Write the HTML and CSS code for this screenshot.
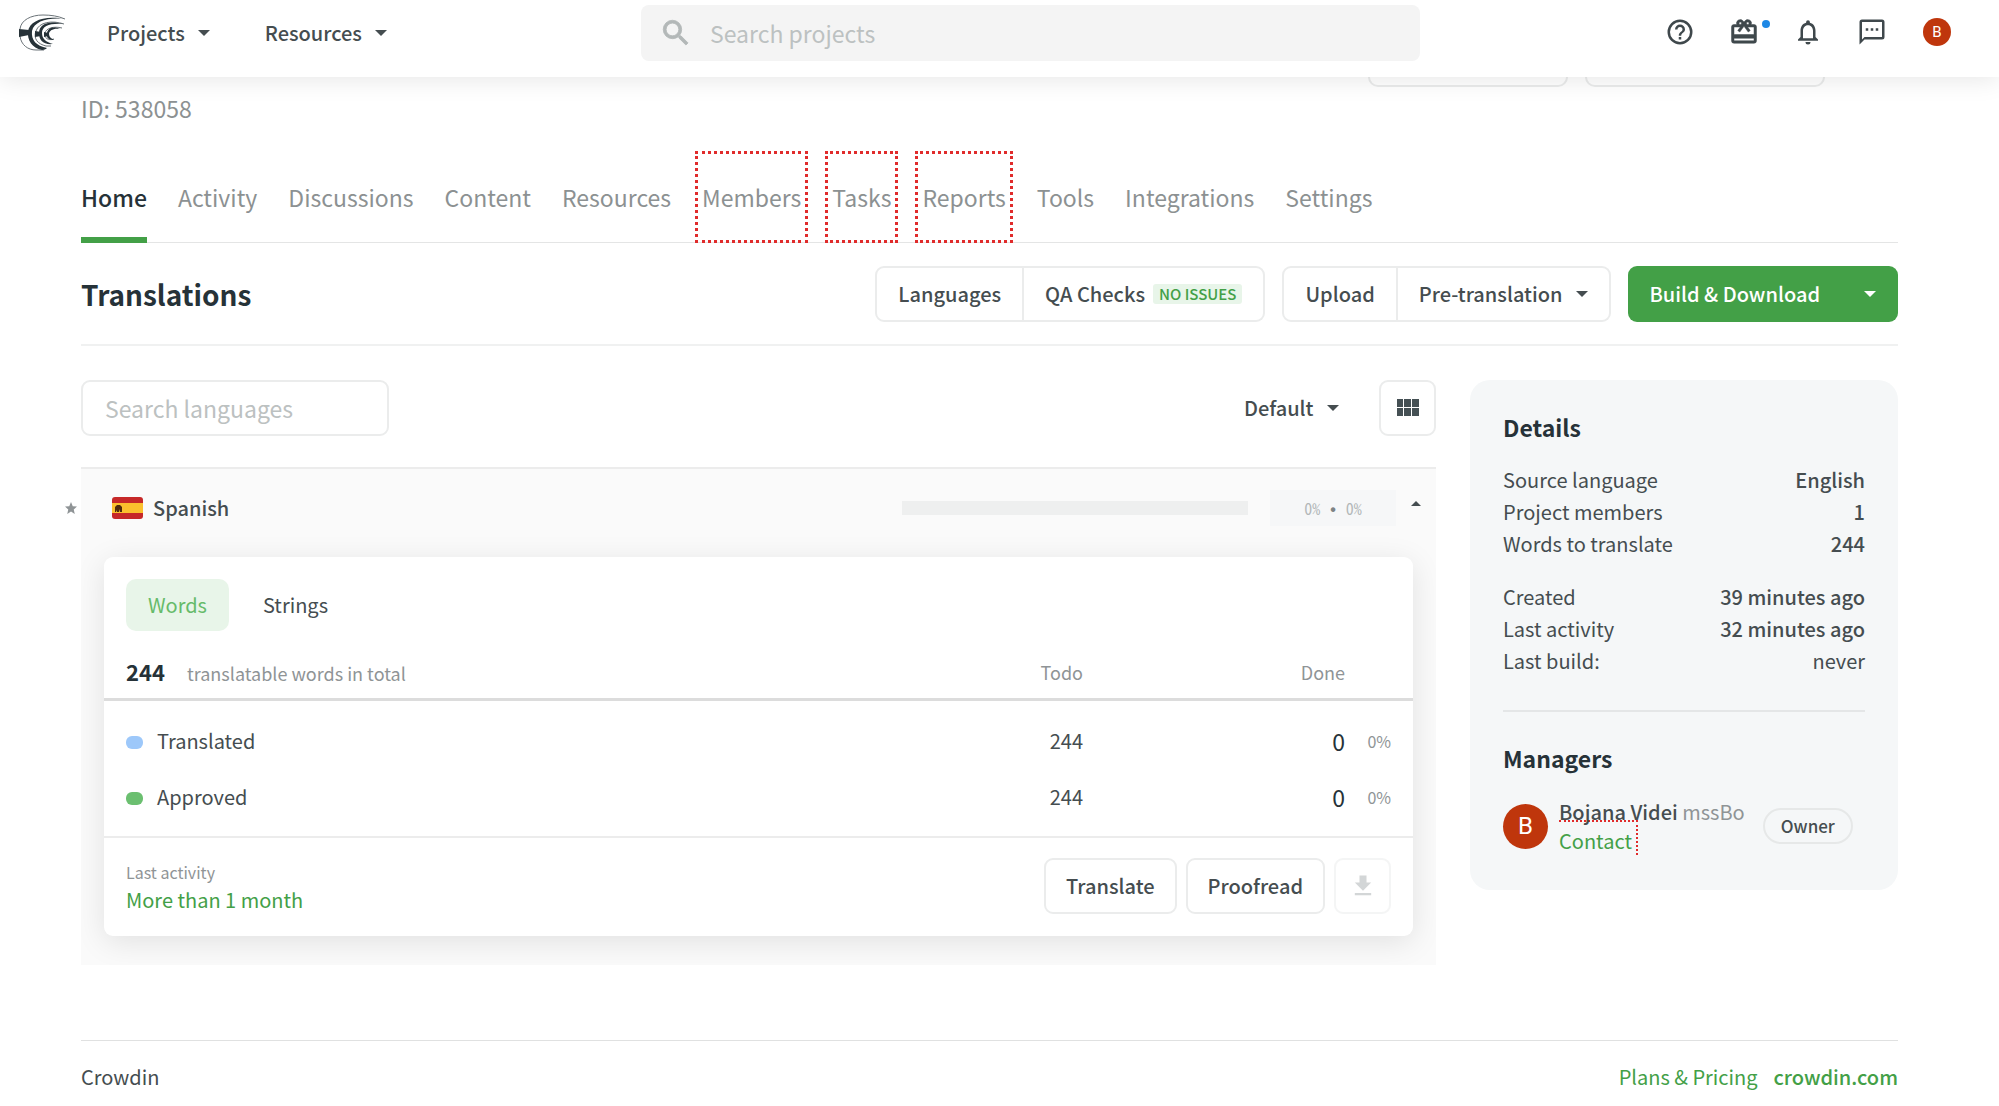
FILE: index.html
```html
<!DOCTYPE html>
<html lang="en">
<head>
    <meta charset="utf-8">
    <title>Translations - Crowdin</title>
    <link rel="stylesheet" href="styles.css">
</head>
<body>
    <header class="topbar">
        <div class="topbar-left">
            <a href="#" class="logo" aria-label="Crowdin">
                <svg width="48" height="38" viewBox="0 0 48 38" fill="none">
                    <path d="M1 15C2 6 12 1 24 1c8 0 15 1 22 4" stroke="#6b7378" stroke-width="1"/>
                    <path d="M1 22c1 9 8 14 16 14h8" stroke="#6b7378" stroke-width="1"/>
                    <path d="M46 5C30 3 15 7 13 17c-1 9 4 15 15 17-1 1-3 2-5 2C13 34 8 26 9 17 11 7 25 1 46 5z" fill="#263238"/>
                    <path d="M0 15l10 1v5l-10 2z" fill="#263238"/>
                    <path d="M45 10C33 6 20 8 17 17c-3 8 2 13 10 15h5" stroke="#6b7378" stroke-width="1"/>
                    <path d="M44 10C31 9 23 12 23 19c0 6 4 9 11 11-10 1-14-4-14-11C20 10 30 6 44 10z" fill="#263238"/>
                    <path d="M16 17l6 1v4l-6 1z" fill="#263238"/>
                    <path d="M43 14c-8-2-16 0-17 5-1 5 3 8 9 6" stroke="#6b7378" stroke-width="1"/>
                    <path d="M41 15c-7-1-11 2-11 5 0 3 2 4 5 6-5 0-8-2-7-7 1-5 6-7 13-4z" fill="#263238"/>
                    <path d="M25 18l4 1v3l-4 1z" fill="#263238"/>
                </svg>
            </a>
            <button type="button" class="menu-btn">Projects <span class="caret"></span></button>
            <button type="button" class="menu-btn">Resources <span class="caret"></span></button>
        </div>
        <label class="top-search">
            <svg width="34" height="34" viewBox="0 0 24 24" fill="#b3b8b8" stroke="#b3b8b8" stroke-width=".6"><path d="M15.500 14h-.79l-.28-.27A6.470 6.470 0 0 0 16 9.500 6.500 6.500 0 1 0 9.500 16c1.610 0 3.090-.59 4.230-1.570l.27.28v.79l5 4.990L20.490 19zm-6 0a4.500 4.500 0 1 1 0-9 4.500 4.500 0 0 1 0 9z"/></svg>
            <input type="text" placeholder="Search projects" aria-label="Search projects">
        </label>
        <div class="topbar-right">
            <button type="button" class="icon-btn" aria-label="Help">
                <svg width="30" height="30" viewBox="0 0 24 24"><path d="M11 18h2v-2h-2zm1-16a10 10 0 1 0 0 20 10 10 0 0 0 0-20zm0 18a8 8 0 1 1 0-16 8 8 0 0 1 0 16zm0-14a4 4 0 0 0-4 4h2a2 2 0 1 1 4 0c0 2-3 1.750-3 5h2c0-2.250 3-2.500 3-5a4 4 0 0 0-4-4z"/></svg>
            </button>
            <button type="button" class="icon-btn" aria-label="What's new">
                <svg width="30" height="30" viewBox="0 0 24 24" stroke="#3f484c" stroke-width=".4"><path d="M20 6h-2.180A3 3 0 0 0 12.500 3.350l-.5.670-.5-.68A3 3 0 0 0 6.180 6H4a2 2 0 0 0-2 2v11a2 2 0 0 0 2 2h16a2 2 0 0 0 2-2V8a2 2 0 0 0-2-2zm-5-2a1 1 0 1 1 0 2 1 1 0 0 1 0-2zM9 4a1 1 0 1 1 0 2 1 1 0 0 1 0-2zm11 15H4v-2h16zm0-5H4V8h5.080L7 10.830 8.620 12 12 7.400l3.380 4.600L17 10.830 14.920 8H20z"/></svg>
                <span class="dot"></span>
            </button>
            <button type="button" class="icon-btn" aria-label="Notifications">
                <svg width="30" height="30" viewBox="0 0 24 24"><path d="M12 22a2 2 0 0 0 2-2h-4a2 2 0 0 0 2 2zm6-6v-5c0-3.070-1.630-5.640-4.500-6.320V4a1.500 1.500 0 0 0-3 0v.68C7.640 5.360 6 7.920 6 11v5l-2 2v1h16v-1zm-2 1H8v-6c0-2.480 1.510-4.500 4-4.500s4 2.020 4 4.500z"/></svg>
            </button>
            <button type="button" class="icon-btn" aria-label="Messages">
                <svg width="30" height="30" viewBox="0 0 24 24"><path d="M20 2H4a2 2 0 0 0-2 2v18l4-4h14a2 2 0 0 0 2-2V4a2 2 0 0 0-2-2zm0 14H6l-2 2V4h16zM7 9h2v2H7zm4 0h2v2h-2zm4 0h2v2h-2z"/></svg>
            </button>
            <a href="#" class="avatar avatar-sm">B</a>
        </div>
    </header>

    <main class="page">
        <div class="project-head">
            <div class="project-id">ID: 538058</div>
            <div class="project-actions">
                <span class="action-edge"></span>
                <span class="action-edge action-edge-wide"></span>
            </div>
        </div>

        <nav class="tabs">
            <a href="#" class="active">Home</a>
            <a href="#">Activity</a>
            <a href="#">Discussions</a>
            <a href="#">Content</a>
            <a href="#">Resources</a>
            <a href="#" class="marked">Members</a>
            <a href="#" class="marked">Tasks</a>
            <a href="#" class="marked">Reports</a>
            <a href="#">Tools</a>
            <a href="#">Integrations</a>
            <a href="#">Settings</a>
        </nav>

        <div class="title-row">
            <h1>Translations</h1>
            <div class="btn-group">
                <button type="button" class="btn">Languages</button>
                <button type="button" class="btn">QA Checks <span class="badge">NO ISSUES</span></button>
            </div>
            <div class="btn-group">
                <button type="button" class="btn">Upload</button>
                <button type="button" class="btn">Pre-translation <span class="caret"></span></button>
            </div>
            <div class="btn-group primary">
                <button type="button" class="btn">Build &amp; Download</button>
                <button type="button" class="btn" aria-label="More build options"><span class="caret"></span></button>
            </div>
        </div>

        <div class="columns">
            <section class="languages">
                <div class="toolbar">
                    <input type="text" class="lang-search" placeholder="Search languages" aria-label="Search languages">
                    <label class="sort">
                        <select aria-label="Sort order"><option>Default</option></select>
                        <span class="caret"></span>
                    </label>
                    <button type="button" class="btn btn-icon" aria-label="Grid view">
                        <svg width="24" height="20" viewBox="0 0 24 20" fill="#455054"><path d="M1 1h6v8H1zM8 1h7v8H8zM16 1h7v8h-7zM1 10h6v8H1zM8 10h7v8H8zM16 10h7v8h-7z"/></svg>
                    </button>
                </div>

                <div class="lang-item">
                    <svg class="star" width="12" height="12" viewBox="0 0 24 24"><path d="M12 0l3.500 8.500L24 9.200l-6.500 5.700L19.500 24 12 19l-7.500 5 2-9.100L0 9.200l8.500-.7z"/></svg>
                    <div class="lang-panel">
                        <div class="lang-row">
                            <svg width="31" height="22" viewBox="0 0 31 22">
                                <rect width="31" height="22" rx="3" fill="#c62828"/>
                                <rect y="6" width="31" height="10" fill="#fbc02d"/>
                                <path d="M3 15v-5l2-2h3l2 2v5H8v-3l-1 3H5v-2l-1 2z" fill="#4e2a0c"/>
                            </svg>
                            <span class="lang-name">Spanish</span>
                            <span class="progress"></span>
                            <span class="percents">0% <b>•</b> 0%</span>
                            <button type="button" class="toggle" aria-label="Collapse"><span class="caret caret-up"></span></button>
                        </div>

                        <div class="card">
                            <div class="units">
                                <button type="button" class="unit active">Words</button>
                                <button type="button" class="unit">Strings</button>
                            </div>
                            <table class="stats">
                                <thead>
                                    <tr>
                                        <th class="total"><strong>244</strong>translatable words in total</th>
                                        <th class="num">Todo</th>
                                        <th class="num">Done</th>
                                        <th class="pct"></th>
                                    </tr>
                                </thead>
                                <tbody>
                                    <tr>
                                        <td><span class="mark blue"></span>Translated</td>
                                        <td class="num">244</td>
                                        <td class="num done">0</td>
                                        <td class="pct">0%</td>
                                    </tr>
                                    <tr>
                                        <td><span class="mark green"></span>Approved</td>
                                        <td class="num">244</td>
                                        <td class="num done">0</td>
                                        <td class="pct">0%</td>
                                    </tr>
                                </tbody>
                            </table>
                            <div class="card-foot">
                                <div class="last">
                                    <small>Last activity</small>
                                    <a href="#">More than 1 month</a>
                                </div>
                                <button type="button" class="btn">Translate</button>
                                <button type="button" class="btn">Proofread</button>
                                <button type="button" class="btn btn-icon" aria-label="Download" disabled>
                                    <svg width="28" height="28" viewBox="0 0 24 24" fill="#a9aeb0"><path d="M19 9h-4V3H9v6H5l7 7zM5 18v2h14v-2z"/></svg>
                                </button>
                            </div>
                        </div>
                    </div>
                </div>
            </section>

            <aside class="sidebar">
                <h2>Details</h2>
                <dl>
                    <div><dt>Source language</dt><dd>English</dd></div>
                    <div><dt>Project members</dt><dd>1</dd></div>
                    <div><dt>Words to translate</dt><dd>244</dd></div>
                </dl>
                <dl>
                    <div><dt>Created</dt><dd>39 minutes ago</dd></div>
                    <div><dt>Last activity</dt><dd>32 minutes ago</dd></div>
                    <div><dt>Last build:</dt><dd class="plain">never</dd></div>
                </dl>
                <hr>
                <h2>Managers</h2>
                <div class="manager">
                    <span class="avatar">B</span>
                    <div class="who">
                        <div><a href="#" class="name">Bojana Videi</a> <span class="login">mssBo</span></div>
                        <a href="#" class="contact">Contact</a>
                    </div>
                    <span class="role">Owner</span>
                </div>
            </aside>
        </div>

        <footer class="footer">
            <span>Crowdin</span>
            <a href="#">Plans &amp; Pricing</a>
            <a href="#" class="site">crowdin.com</a>
        </footer>
    </main>
</body>
</html>
```
FILE: styles.css
```css
* {
    box-sizing: border-box;
}

body {
    margin: 0;
    background: #fff;
    color: #454d50;
    font: 20px/32px "Noto Sans CJK SC", "Open Sans", sans-serif;
}

a {
    color: #43a047;
    text-decoration: none;
}

button, input, select {
    font: inherit;
    color: inherit;
    margin: 0;
}

button {
    padding: 0;
    border: 0;
    background: none;
    white-space: nowrap;
}

input::placeholder {
    color: #bcc1c1;
    opacity: 1;
}

.caret {
    display: inline-block;
    border: 6px solid transparent;
    border-top-color: currentColor;
    border-bottom: 0;
}

.caret-up {
    border: 5px solid transparent;
    border-bottom-color: currentColor;
    border-top: 0;
}

/* top bar */
.topbar {
    position: relative;
    z-index: 1;
    display: grid;
    grid-template-columns: 622px 1fr 531px;
    align-items: center;
    padding: 5px 48px 16px 19px;
    background: #fff;
    box-shadow: 0 2px 24px rgba(0, 0, 0, .1);
}

.topbar-left {
    display: flex;
    align-items: center;
}

.logo {
    height: 38px;
    margin-right: 40px;
}

.menu-btn {
    display: flex;
    align-items: center;
    gap: 13px;
    margin-right: 55px;
    font-weight: 500;
}

.top-search {
    display: flex;
    align-items: center;
    height: 56px;
    padding: 0 18px;
    gap: 17px;
    border-radius: 8px;
    background: #f4f4f4;
}

.top-search input {
    flex: 1;
    border: 0;
    padding: 0;
    background: none;
    font-size: 23px;
}

.topbar-right {
    display: flex;
    align-items: center;
    justify-content: flex-end;
    gap: 34px;
    padding-bottom: 2px;
}

.icon-btn {
    position: relative;
    height: 30px;
    fill: #3f484c;
}

.icon-btn svg {
    display: block;
}

.dot {
    position: absolute;
    top: 3px;
    right: -11px;
    width: 8px;
    height: 8px;
    border-radius: 50%;
    background: #1e88e5;
}

.avatar {
    flex: none;
    width: 45px;
    height: 45px;
    border-radius: 50%;
    background: #bf360c;
    color: #fff;
    font: 24px/45px Roboto, sans-serif;
    text-align: center;
}

.avatar-sm {
    width: 28px;
    height: 28px;
    margin-left: 2px;
    font-size: 15px;
    line-height: 28px;
}

/* project */
.page {
    padding: 0 101px 0 81px;
}

.project-head {
    display: flex;
    justify-content: space-between;
    height: 74px;
    padding-right: 73px;
}

.project-id {
    padding-top: 15px;
    font-size: 23px;
    color: #8c9192;
}

.project-actions {
    display: flex;
    gap: 17px;
}

.action-edge {
    width: 200px;
    height: 10px;
    border: 2px solid #ebecec;
    border-top: 0;
    border-radius: 0 0 10px 10px;
}

.action-edge-wide {
    width: 240px;
}

.tabs {
    display: flex;
    gap: 31px;
    height: 92px;
    border-bottom: 1px solid #e4e5e5;
    font-size: 23px;
    line-height: 92px;
}

.tabs a {
    height: 92px;
    color: #8c9192;
}

.tabs .active {
    border-bottom: 6px solid #43a047;
    color: #263238;
    font-weight: 500;
}

.tabs .marked {
    margin: 0 -7px;
    padding: 0 4px;
    border: 3px dotted #e02b2b;
    line-height: 86px;
}

.title-row {
    display: flex;
    align-items: center;
    gap: 17px;
    padding: 23px 0 22px;
    border-bottom: 2px solid #f0f1f1;
}

h1 {
    flex: 1;
    margin: 0;
    font-size: 28px;
    font-weight: 700;
    color: #263238;
}

.btn {
    height: 56px;
    padding: 0 22px;
    border: 2px solid #ebecec;
    border-radius: 9px;
    background: #fff;
    font-weight: 500;
    color: #454d50;
}

.btn-icon {
    display: flex;
    align-items: center;
    justify-content: center;
    width: 57px;
    padding: 0;
}

.btn:disabled {
    opacity: .5;
}

.btn-group {
    display: flex;
}

.btn-group .btn {
    display: flex;
    align-items: center;
    padding: 0 21px;
}

.btn-group .btn:first-child {
    border-radius: 9px 0 0 9px;
}

.btn-group .btn:last-child {
    border-left: 0;
    border-radius: 0 9px 9px 0;
}

.btn-group .caret {
    margin-left: 13px;
}

.badge {
    margin-left: 8px;
    padding: 0 6px;
    border-radius: 3px;
    background: #e8f5e9;
    font-size: 15px;
    line-height: 20px;
    color: #43a047;
}

.primary .btn {
    border: 0;
    background: #43a047;
    color: #fff;
    padding: 0 22px;
}

.primary .caret {
    margin: 0;
}

/* languages */
.columns {
    display: grid;
    grid-template-columns: 1fr 428px;
    align-items: start;
    gap: 34px;
    padding: 34px 0 75px;
}

.toolbar {
    display: flex;
    align-items: center;
    margin-bottom: 31px;
}

.lang-search {
    width: 308px;
    height: 56px;
    padding: 0 22px;
    border: 2px solid #ebecec;
    border-radius: 9px;
    font-size: 23px;
}

.sort {
    display: flex;
    align-items: center;
    gap: 13px;
    margin: 0 40px 0 auto;
    font-weight: 500;
}

.sort select {
    appearance: none;
    padding: 0;
    border: 0;
    background: none;
}

.lang-item {
    position: relative;
}

.star {
    position: absolute;
    top: 35px;
    left: -16px;
    fill: #8f9496;
}

.lang-panel {
    overflow: hidden;
    padding-bottom: 29px;
    border-top: 2px solid #ececec;
    background: #fafafa;
}

.lang-row {
    display: flex;
    align-items: center;
    height: 88px;
    padding: 0 15px 11px 31px;
}

.lang-name {
    margin: 0 auto 0 10px;
    font-weight: 500;
}

.progress {
    width: 346px;
    height: 14px;
    margin-right: 22px;
    background: #eeefef;
}

.percents {
    width: 126px;
    height: 36px;
    margin-right: 15px;
    background: #f6f7f8;
    font: 16px/36px "Noto Sans Mono CJK SC", "Liberation Mono", monospace;
    text-align: center;
    color: #b3b7b8;
}

.percents b {
    font-family: "Liberation Mono", monospace;
    color: #7d8385;
}

.toggle {
    display: flex;
    align-items: flex-start;
    height: 14px;
}

.card {
    margin: 0 23px;
    border-radius: 9px;
    background: #fff;
    box-shadow: 0 6px 30px rgba(0, 0, 0, .1);
}

.units {
    display: flex;
    gap: 12px;
    padding: 22px 22px 16px;
}

.unit {
    height: 52px;
    padding: 0 22px;
    border-radius: 10px;
}

.unit.active {
    background: #e8f5e9;
    color: #66bb6a;
}

.stats {
    width: 100%;
    border-collapse: collapse;
    table-layout: fixed;
}

.stats th {
    height: 52px;
    padding: 0;
    border-bottom: 3px solid #dcdcdc;
    font-size: 18px;
    font-weight: 400;
    text-align: left;
    color: #8f9496;
}

.stats td {
    height: 56px;
    padding: 0;
}

.stats tbody::before {
    content: "";
    display: block;
    height: 12px;
}

.stats th:first-child, .stats td:first-child {
    padding-left: 22px;
}

.stats strong {
    margin-right: 22px;
    font-size: 22px;
    font-weight: 700;
    color: #263238;
}

.stats .num {
    width: 262px;
    text-align: right;
}

.stats .done {
    font-size: 23px;
    color: #263238;
}

.stats .pct {
    width: 68px;
    padding-right: 22px;
    font-size: 16px;
    text-align: right;
    color: #8f9496;
}

.mark {
    display: inline-block;
    width: 17px;
    height: 13px;
    margin-right: 14px;
    border-radius: 6px;
    background: #9dc8fa;
}

.mark.green {
    background: #6bbf70;
}

.card-foot {
    display: flex;
    align-items: center;
    gap: 9px;
    margin-top: 11px;
    padding: 20px 22px 22px;
    border-top: 2px solid #ececec;
}

.card-foot .btn:not(.btn-icon) {
    padding: 0 20px;
}

.last {
    flex: 1;
    line-height: 27px;
}

.last small {
    display: block;
    font-size: 16px;
    color: #8f9496;
}

/* sidebar */
.sidebar {
    padding: 27px 33px 35px;
    border-radius: 20px;
    background: #f5f7f8;
}

h2 {
    margin: 0;
    font-size: 23px;
    font-weight: 700;
    line-height: 40px;
    color: #263238;
}

dl {
    margin: 17px 0 21px;
}

dl div {
    display: flex;
    justify-content: space-between;
}

dd {
    margin: 0;
    font-weight: 500;
}

dd.plain {
    font-weight: 400;
}

hr {
    height: 2px;
    margin: 33px 0 26px;
    border: 0;
    background: #e4e6e7;
}

.manager {
    display: flex;
    align-items: center;
    margin-top: 19px;
}

.who {
    margin: 0 18px 0 11px;
    line-height: 29px;
    white-space: nowrap;
}

.name {
    color: #454d50;
    font-weight: 500;
}

.login {
    color: #8f9496;
}

.contact {
    display: block;
    width: fit-content;
    margin-top: -6px;
    padding: 4px 4px 0 0;
    border: 2px dotted #e02b2b;
    border-width: 2px 2px 0 0;
}

.role {
    padding: 0 16px;
    border: 2px solid #e6e8e8;
    border-radius: 18px;
    font-size: 17px;
    font-weight: 500;
}

/* footer */
.footer {
    display: flex;
    gap: 16px;
    padding: 20px 0 14px;
    border-top: 1px solid #e0e1e1;
}

.footer span {
    flex: 1;
}

.site {
    font-weight: 500;
}
```
